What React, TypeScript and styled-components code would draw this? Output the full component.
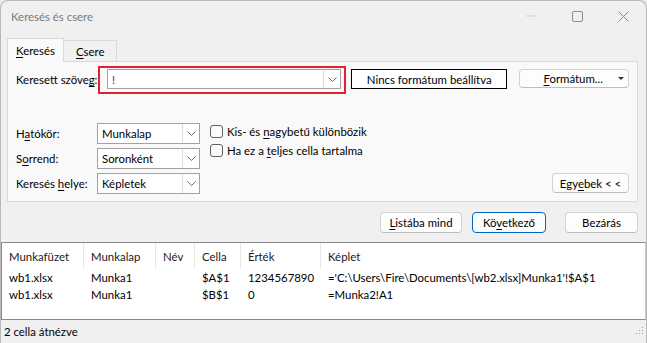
import React from 'react';
import styled, { createGlobalStyle } from 'styled-components';

const GlobalStyle = createGlobalStyle`
  html, body {
    margin: 0;
    padding: 0;
    background: #ececec;
  }
  body {
    font-family: Lato, "Noto Sans", sans-serif;
    font-size: 11.4px;
    color: #000;
  }
`;

const Window = styled.div`
  width: 647px;
  height: 343px;
  box-sizing: border-box;
  border: 1px solid #b9b9b9;
  border-bottom: none;
  border-radius: 8px 8px 0 0;
  background: #f0f0f0;
  display: flex;
  flex-direction: column;
  overflow: hidden;
`;

const TitleBar = styled.div`
  height: 30px;
  display: flex;
  align-items: center;
  flex-shrink: 0;
`;

const Title = styled.div`
  flex: 1;
  padding-left: 10px;
  color: #7a7a7a;
`;

const Control = styled.div`
  width: 46px;
  height: 30px;
  display: flex;
  align-items: center;
  justify-content: center;
`;

const Body = styled.div`
  padding: 7px 8px 0 6px;
  display: flex;
  flex-direction: column;
`;

const TabStrip = styled.div`
  display: flex;
  align-items: flex-end;
  height: 23px;
`;

const Tab = styled.div<{ $active?: boolean }>`
  box-sizing: border-box;
  height: ${({ $active }) => ($active ? '24px' : '21px')};
  padding: 0 ${({ $active }) => ($active ? '8px' : '12px')};
  display: flex;
  align-items: center;
  border: 1px solid #dadada;
  border-bottom: none;
  border-left: ${({ $active }) => ($active ? '1px solid #dadada' : 'none')};
  background: ${({ $active }) => ($active ? '#f9f9f9' : '#f0f0f0')};
  margin-bottom: ${({ $active }) => ($active ? '-1px' : '0')};
  position: relative;
  z-index: ${({ $active }) => ($active ? 1 : 0)};
`;

const Panel = styled.div`
  box-sizing: border-box;
  height: 141px;
  border: 1px solid #dadada;
  background: #f9f9f9;
  padding: 4px 8px 0 8px;
  display: flex;
  flex-direction: column;
`;

const Mn = styled.span`
  text-decoration: underline;
  text-underline-offset: 2px;
  text-decoration-thickness: 1px;
`;

const FindRow = styled.div`
  display: flex;
  align-items: flex-start;
`;

const FieldLabel = styled.div<{ $width: number }>`
  width: ${({ $width }) => $width}px;
  flex-shrink: 0;
  white-space: nowrap;
`;

const FindLabel = styled(FieldLabel)`
  padding-top: 7px;
`;

const RedFrame = styled.div`
  border: 2px solid #e3212f;
  padding: 1px 3px 3px 7px;
`;

const Combo = styled.div<{ $width: number; $height: number }>`
  box-sizing: border-box;
  width: ${({ $width }) => $width}px;
  height: ${({ $height }) => $height}px;
  border: 1px solid #a2a2a2;
  background: #fff;
  display: flex;
`;

const ComboText = styled.div<{ $color?: string }>`
  flex: 1;
  display: flex;
  align-items: center;
  padding-left: 4px;
  color: ${({ $color }) => $color || '#000'};
  white-space: nowrap;
`;

const ComboButton = styled.div`
  width: 16px;
  border-left: 1px solid #dcdcdc;
  display: flex;
  align-items: center;
  justify-content: center;
`;

const FormatBox = styled.div`
  box-sizing: border-box;
  margin: 3px 0 0 5px;
  width: 157px;
  height: 20px;
  border: 1px solid #000;
  background: #fff;
  display: flex;
  align-items: center;
  justify-content: center;
  white-space: nowrap;
`;

const Button = styled.div<{ $width: number; $default?: boolean }>`
  box-sizing: border-box;
  width: ${({ $width }) => $width}px;
  height: 21px;
  border: 1px solid ${({ $default }) => ($default ? '#0067c0' : '#d2d2d2')};
  border-bottom-color: ${({ $default }) => ($default ? '#0067c0' : '#bdbdbd')};
  border-radius: 4px;
  background: #fdfdfd;
  display: flex;
  align-items: center;
  justify-content: center;
  white-space: nowrap;
`;

const MenuButton = styled(Button)`
  margin: 3px 0 0 12px;
  height: 19px;
  justify-content: flex-start;
`;

const MenuButtonText = styled.div`
  flex: 1;
  text-align: center;
  padding-left: 12px;
`;

const MenuArrow = styled.div`
  width: 14px;
  display: flex;
  align-items: center;
  justify-content: center;
`;

const OptionsRow = styled.div`
  margin-top: 29px;
  display: flex;
  align-items: flex-start;
`;

const OptionGrid = styled.div`
  display: grid;
  grid-template-columns: 81px 103px;
  row-gap: 4px;
  align-items: center;
`;

const CheckList = styled.div`
  margin-left: 10px;
  padding-top: 1px;
  display: flex;
  flex-direction: column;
  gap: 4px;
`;

const CheckRow = styled.div`
  display: flex;
  align-items: center;
  height: 15px;
  gap: 4px;
  white-space: nowrap;
`;

const CheckBox = styled.div`
  box-sizing: border-box;
  width: 13px;
  height: 13px;
  border: 1px solid #5f5f5f;
  border-radius: 3px;
  background: #fbfbfb;
`;

const Spacer = styled.div`
  flex: 1;
`;

const MoreButton = styled(Button)`
  align-self: flex-end;
  margin-bottom: 1px;
  height: 20px;
`;

const ActionRow = styled.div`
  display: flex;
  justify-content: flex-end;
  margin-top: 10px;
`;

const ActionGap = styled.div<{ $width: number }>`
  width: ${({ $width }) => $width}px;
`;

const ResultList = styled.div`
  margin: 9px 0 0 0;
  height: 78px;
  box-sizing: border-box;
  border: 1px solid #8a8a8a;
  border-right-color: #c4c4c4;
  background: #fff;
  display: grid;
  grid-template-columns: 82px 72px 39px 46px 80px 1fr;
  grid-template-rows: 26px 17px 17px;
  align-content: start;
`;

const HeadCell = styled.div<{ $last?: boolean }>`
  display: flex;
  align-items: center;
  padding-left: 7px;
  border-right: ${({ $last }) => ($last ? 'none' : '1px solid #e8e8e8')};
  color: #1a1a1a;
  white-space: nowrap;
`;

const Cell = styled.div`
  display: flex;
  align-items: center;
  padding-left: 7px;
  white-space: nowrap;
`;

const StatusBar = styled.div`
  flex: 1;
  display: flex;
  align-items: center;
  padding-left: 3px;
  padding-right: 2px;
`;

const Chevron = () => (
  <svg width="9" height="5" viewBox="0 0 9 5">
    <path d="M0.5 0.5 L4.5 4.5 L8.5 0.5" fill="none" stroke="#6a6a6a" strokeWidth="1" />
  </svg>
);

const ComboField: React.FC<{ width: number; height: number; color?: string; children: React.ReactNode }> = ({
  width,
  height,
  color,
  children,
}) => (
  <Combo $width={width} $height={height}>
    <ComboText $color={color}>{children}</ComboText>
    <ComboButton>
      <Chevron />
    </ComboButton>
  </Combo>
);

const rows = [
  ['wb1.xlsx', 'Munka1', '', '$A$1', '1234567890', "='C:\\Users\\Fire\\Documents\\[wb2.xlsx]Munka1'!$A$1"],
  ['wb1.xlsx', 'Munka1', '', '$B$1', '0', '=Munka2!A1'],
];

const headers = ['Munkafüzet', 'Munkalap', 'Név', 'Cella', 'Érték', 'Képlet'];

const App = () => {
  return (
    <>
      <GlobalStyle />
      <Window>
        <TitleBar>
          <Title>Keresés és csere</Title>
          <Control>
            <svg width="10" height="2" viewBox="0 0 10 2">
              <path d="M0 1 H10" stroke="#cfcfcf" strokeWidth="1" />
            </svg>
          </Control>
          <Control>
            <svg width="11" height="11" viewBox="0 0 11 11">
              <rect x="0.5" y="0.5" width="10" height="10" rx="1.5" fill="none" stroke="#8c8c8c" />
            </svg>
          </Control>
          <Control>
            <svg width="11" height="11" viewBox="0 0 11 11">
              <path d="M0.5 0.5 L10.5 10.5 M10.5 0.5 L0.5 10.5" stroke="#8c8c8c" strokeWidth="1" />
            </svg>
          </Control>
        </TitleBar>
        <Body>
          <TabStrip>
            <Tab $active>
              <span>
                <Mn>K</Mn>eresés
              </span>
            </Tab>
            <Tab>
              <span>
                <Mn>C</Mn>sere
              </span>
            </Tab>
          </TabStrip>
          <Panel>
            <FindRow>
              <FindLabel $width={82}>
                Keresett szöve<Mn>g</Mn>:
              </FindLabel>
              <RedFrame>
                <ComboField width={234} height={20} color="#6b1470">
                  !
                </ComboField>
              </RedFrame>
              <FormatBox>Nincs formátum beállítva</FormatBox>
              <MenuButton $width={110}>
                <MenuButtonText>
                  <Mn>F</Mn>ormátum...
                </MenuButtonText>
                <MenuArrow>
                  <svg width="6" height="3" viewBox="0 0 6 3">
                    <path d="M0 0 H6 L3 3 Z" fill="#333" />
                  </svg>
                </MenuArrow>
              </MenuButton>
            </FindRow>
            <OptionsRow>
              <OptionGrid>
                <FieldLabel $width={81}>
                  H<Mn>a</Mn>tókör:
                </FieldLabel>
                <ComboField width={103} height={21}>
                  Munkalap
                </ComboField>
                <FieldLabel $width={81}>
                  S<Mn>o</Mn>rrend:
                </FieldLabel>
                <ComboField width={103} height={21}>
                  Soronként
                </ComboField>
                <FieldLabel $width={81}>
                  Keresés <Mn>h</Mn>elye:
                </FieldLabel>
                <ComboField width={103} height={21}>
                  Képletek
                </ComboField>
              </OptionGrid>
              <CheckList>
                <CheckRow>
                  <CheckBox />
                  <span>
                    Kis- és <Mn>n</Mn>agybetű különbözik
                  </span>
                </CheckRow>
                <CheckRow>
                  <CheckBox />
                  <span>
                    Ha ez a <Mn>t</Mn>eljes cella tartalma
                  </span>
                </CheckRow>
              </CheckList>
              <Spacer />
              <MoreButton $width={77}>
                <span>
                  Egy<Mn>e</Mn>bek &lt; &lt;
                </span>
              </MoreButton>
            </OptionsRow>
          </Panel>
          <ActionRow>
            <Button $width={82}>
              <span>
                <Mn>L</Mn>istába mind
              </span>
            </Button>
            <ActionGap $width={10} />
            <Button $width={74} $default>
              <span>
                Kö<Mn>v</Mn>etkező
              </span>
            </Button>
            <ActionGap $width={19} />
            <Button $width={73}>Bezárás</Button>
          </ActionRow>
        </Body>
        <ResultList>
          {headers.map((h, i) => (
            <HeadCell key={h} $last={i === headers.length - 1}>
              {h}
            </HeadCell>
          ))}
          {rows.map((r, ri) => r.map((c, ci) => <Cell key={`${ri}-${ci}`}>{c}</Cell>))}
        </ResultList>
        <StatusBar>
          <span>2 cella átnézve</span>
          <Spacer />
          <svg width="10" height="10" viewBox="0 0 10 10">
            <g fill="#9a9a9a">
              <rect x="8" y="0" width="1" height="1" />
              <rect x="5" y="3" width="1" height="1" />
              <rect x="8" y="3" width="1" height="1" />
              <rect x="2" y="6" width="1" height="1" />
              <rect x="5" y="6" width="1" height="1" />
              <rect x="8" y="6" width="1" height="1" />
            </g>
          </svg>
        </StatusBar>
      </Window>
    </>
  );
};

export default App;
